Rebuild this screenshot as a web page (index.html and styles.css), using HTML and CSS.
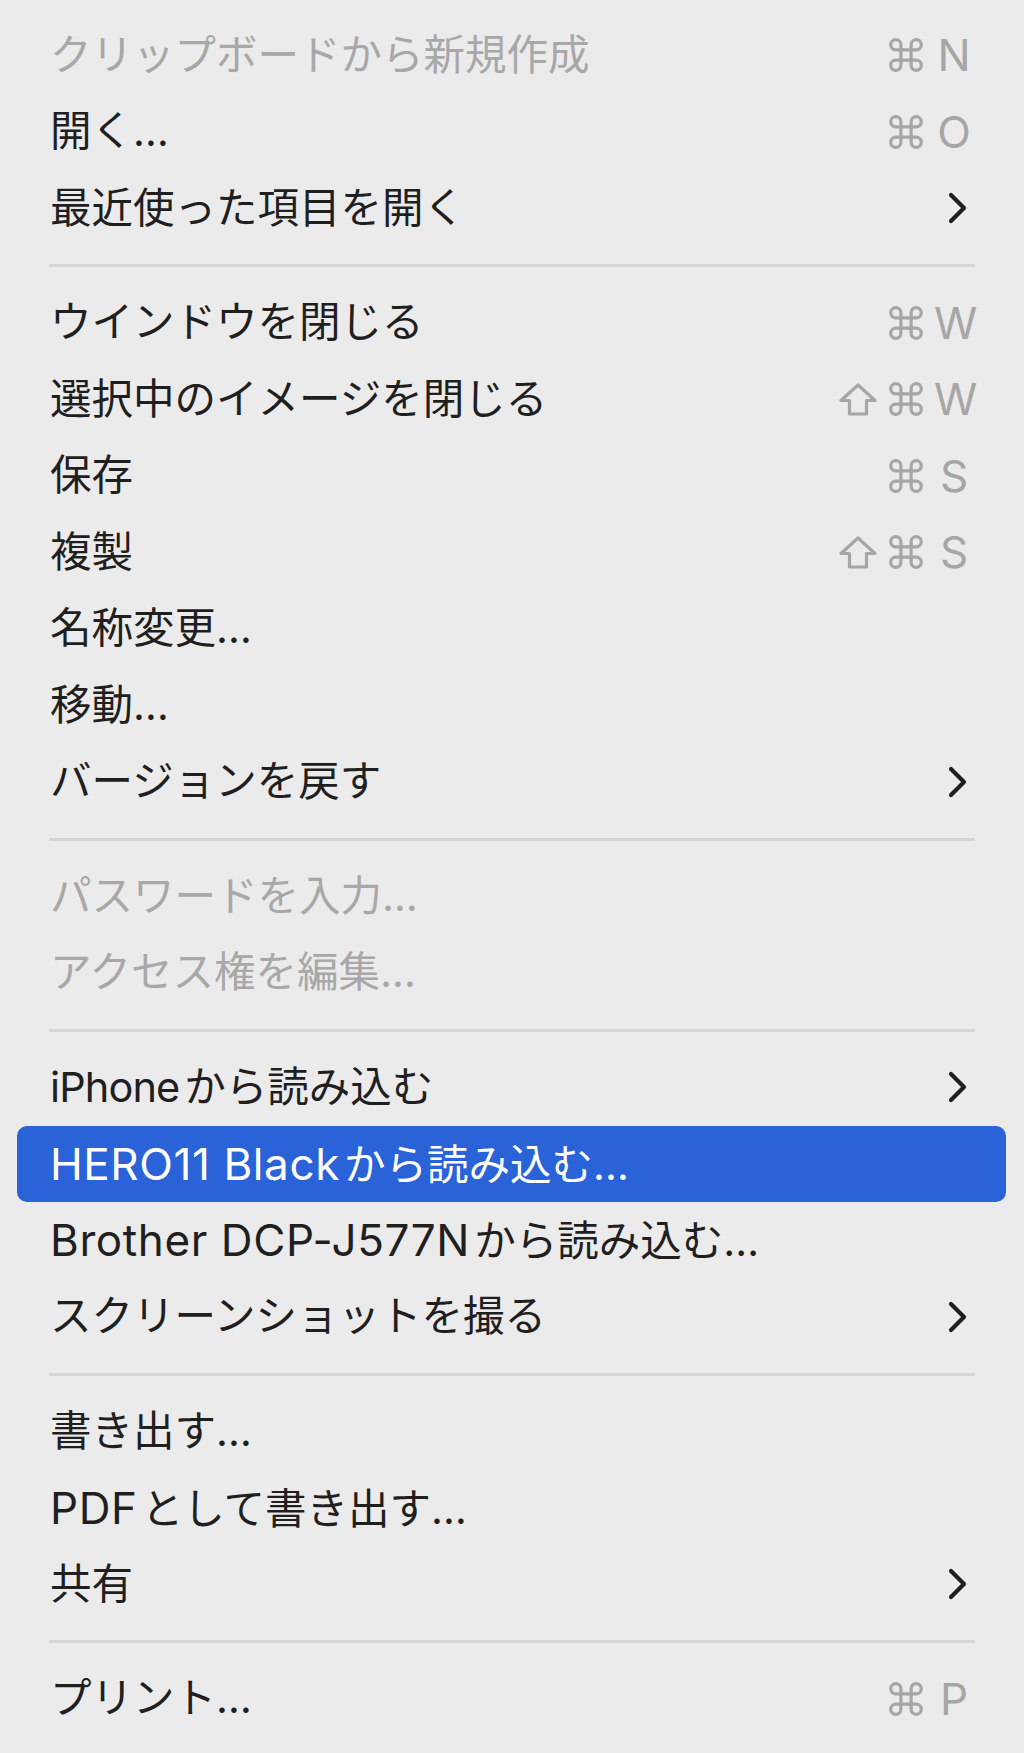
FILE: index.html
```html
<!DOCTYPE html>
<html lang="ja">
<head>
<meta charset="utf-8">
<title>ファイルメニュー</title>
<link rel="stylesheet" href="styles.css">
</head>
<body>
<svg width="0" height="0" class="defs" aria-hidden="true">
  <defs>
    <symbol id="cmd" viewBox="2 2 20 20">
      <path d="M15 6v12a3 3 0 1 0 3-3H6a3 3 0 1 0 3 3V6a3 3 0 1 0-3 3h12a3 3 0 1 0-3-3" fill="none" stroke="currentColor" stroke-width="1.9" stroke-linejoin="round"/>
    </symbol>
    <symbol id="shift" viewBox="0 0 38 33">
      <path d="M19 2 L2 17.5 H10.5 V31 H27.5 V17.5 H36 Z" fill="none" stroke="currentColor" stroke-width="3.2" stroke-linejoin="round"/>
    </symbol>
    <symbol id="chev" viewBox="0 0 19 32">
      <path d="M3 3 L16 16 L3 29" fill="none" stroke="currentColor" stroke-width="4.2" stroke-linecap="round" stroke-linejoin="round"/>
    </symbol>
  </defs>
</svg>
<div class="menu">
  <div class="item disabled"><span class="label">クリップボードから新規作成</span><span class="sc"><svg class="ic-cmd"><use href="#cmd"/></svg><span class="key">N</span></span></div>
  <div class="item"><span class="label">開く…</span><span class="sc"><svg class="ic-cmd"><use href="#cmd"/></svg><span class="key">O</span></span></div>
  <div class="item"><span class="label">最近使った項目を開く</span><span class="sub"><svg class="ic-chev"><use href="#chev"/></svg></span></div>
  <div class="sep"></div>
  <div class="item"><span class="label">ウインドウを閉じる</span><span class="sc"><svg class="ic-cmd"><use href="#cmd"/></svg><span class="key">W</span></span></div>
  <div class="item"><span class="label">選択中のイメージを閉じる</span><span class="sc"><svg class="ic-shift"><use href="#shift"/></svg><svg class="ic-cmd"><use href="#cmd"/></svg><span class="key">W</span></span></div>
  <div class="item"><span class="label">保存</span><span class="sc"><svg class="ic-cmd"><use href="#cmd"/></svg><span class="key">S</span></span></div>
  <div class="item"><span class="label">複製</span><span class="sc"><svg class="ic-shift"><use href="#shift"/></svg><svg class="ic-cmd"><use href="#cmd"/></svg><span class="key">S</span></span></div>
  <div class="item"><span class="label">名称変更…</span></div>
  <div class="item"><span class="label">移動…</span></div>
  <div class="item"><span class="label">バージョンを戻す</span><span class="sub"><svg class="ic-chev"><use href="#chev"/></svg></span></div>
  <div class="sep"></div>
  <div class="item disabled"><span class="label">パスワードを入力…</span></div>
  <div class="item disabled"><span class="label">アクセス権を編集…</span></div>
  <div class="sep"></div>
  <div class="item"><span class="label"><span class="lat-s">iPhone</span>から読み込む</span><span class="sub"><svg class="ic-chev"><use href="#chev"/></svg></span></div>
  <div class="item selected"><span class="label"><span class="lat">HERO11 Black</span>から読み込む…</span></div>
  <div class="item"><span class="label"><span class="lat">Brother DCP-J577N</span>から読み込む…</span></div>
  <div class="item"><span class="label">スクリーンショットを撮る</span><span class="sub"><svg class="ic-chev"><use href="#chev"/></svg></span></div>
  <div class="sep"></div>
  <div class="item"><span class="label">書き出す…</span></div>
  <div class="item"><span class="label"><span class="lat">PDF</span>として書き出す…</span></div>
  <div class="item"><span class="label">共有</span><span class="sub"><svg class="ic-chev"><use href="#chev"/></svg></span></div>
  <div class="sep"></div>
  <div class="item"><span class="label">プリント…</span><span class="sc"><svg class="ic-cmd"><use href="#cmd"/></svg><span class="key">P</span></span></div>
</div>
</body>
</html>
```

FILE: styles.css
```css
html, body {
  margin: 0;
  padding: 0;
  background: #ebebeb;
}

.defs {
  position: absolute;
  width: 0;
  height: 0;
  overflow: hidden;
}

.menu {
  display: flex;
  flex-direction: column;
  padding: 17px 18px 16px 17px;
  font-family: "Inter", "Noto Sans CJK JP", sans-serif;
  font-size: 41.5px;
  color: #1f1f1f;
}

.item {
  height: 76.5px;
  display: flex;
  align-items: center;
  padding: 0 32px 0 33px;
  border-radius: 10px;
  box-sizing: border-box;
}

.label {
  flex: 1;
  white-space: nowrap;
  line-height: 1;
}

.lat {
  font-size: 44px;
  letter-spacing: 0.6px;
  margin-right: 4px;
}

.lat-s {
  font-size: 41.5px;
  letter-spacing: -0.9px;
  margin-right: 5px;
}

.item.disabled .label {
  color: #a8a8a8;
}

.item.selected {
  background: #2a62d8;
  color: #ffffff;
}

.sep {
  height: 38px;
  display: flex;
  align-items: center;
  padding: 0 31px 0 32px;
}

.sep::before {
  content: "";
  flex: 1;
  height: 3px;
  background: #d4d4d4;
}

.sc {
  display: flex;
  align-items: center;
  color: #a6a6a6;
}

.ic-shift {
  width: 38px;
  height: 33px;
  margin-right: 12px;
}

.ic-cmd {
  width: 34px;
  height: 34px;
}

.key {
  width: 40px;
  margin-left: 11px;
  text-align: center;
  font-size: 44px;
  line-height: 1;
}

.sub {
  width: 40px;
  display: flex;
  justify-content: flex-end;
  color: #1f1f1f;
}

.ic-chev {
  width: 19px;
  height: 32px;
  margin-right: 7px;
}
```
